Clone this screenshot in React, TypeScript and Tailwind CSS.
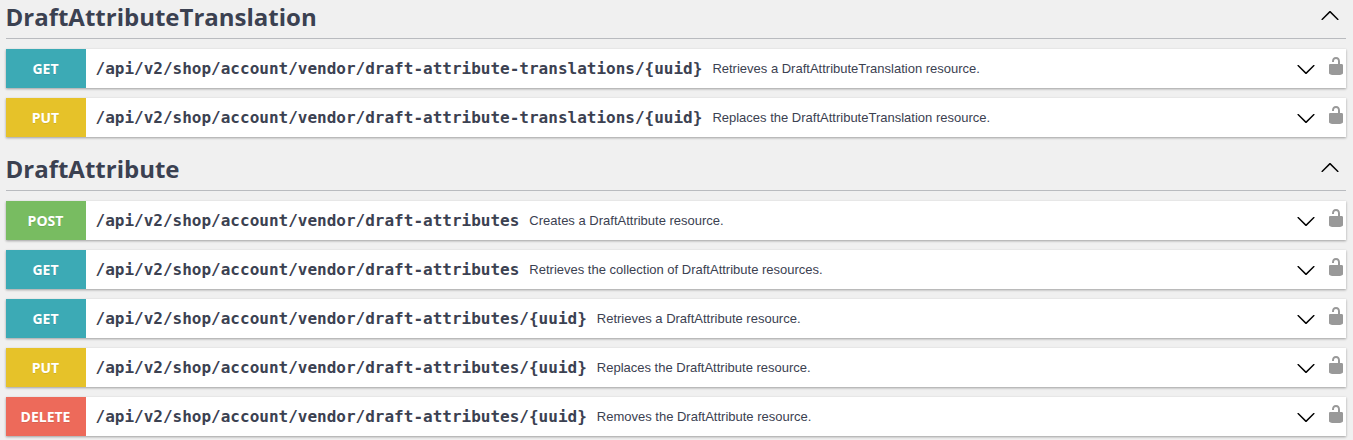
type Op = { method: keyof typeof colors; path: string; text: string };

const colors = {
  GET: "bg-[#3caab5]",
  PUT: "bg-[#e6c229]",
  POST: "bg-[#78bc61]",
  DELETE: "bg-[#ed6a5a]",
};

const groups: { name: string; ops: Op[] }[] = [
  {
    name: "DraftAttributeTranslation",
    ops: [
      { method: "GET", path: "/api/v2/shop/account/vendor/draft-attribute-translations/{uuid}", text: "Retrieves a DraftAttributeTranslation resource." },
      { method: "PUT", path: "/api/v2/shop/account/vendor/draft-attribute-translations/{uuid}", text: "Replaces the DraftAttributeTranslation resource." },
    ],
  },
  {
    name: "DraftAttribute",
    ops: [
      { method: "POST", path: "/api/v2/shop/account/vendor/draft-attributes", text: "Creates a DraftAttribute resource." },
      { method: "GET", path: "/api/v2/shop/account/vendor/draft-attributes", text: "Retrieves the collection of DraftAttribute resources." },
      { method: "GET", path: "/api/v2/shop/account/vendor/draft-attributes/{uuid}", text: "Retrieves a DraftAttribute resource." },
      { method: "PUT", path: "/api/v2/shop/account/vendor/draft-attributes/{uuid}", text: "Replaces the DraftAttribute resource." },
      { method: "DELETE", path: "/api/v2/shop/account/vendor/draft-attributes/{uuid}", text: "Removes the DraftAttribute resource." },
    ],
  },
];

function Arrow({ className }: { className: string }) {
  return (
    <svg viewBox="0 0 20 20" fill="currentColor" className={`h-5 w-5 shrink-0 text-black ${className}`}>
      <path d="M17.418 6.109c.272-.268.709-.268.979 0s.271.701 0 .969l-7.908 7.83c-.27.268-.707.268-.979 0l-7.908-7.83c-.27-.268-.27-.701 0-.969.271-.268.709-.268.979 0L10 13.25z" />
    </svg>
  );
}

function Lock() {
  return (
    <svg viewBox="0 0 20 20" fill="currentColor" className="mb-1.5 h-5 w-5 shrink-0 text-[#999999]">
      <path d="M15.8 8H14V5.6C14 2.703 12.665 1 10 1 7.334 1 6 2.703 6 5.6V6h2v-.801C8 3.754 8.797 3 10 3c1.203 0 2 .754 2 2.199V8H4c-.553 0-1 .646-1 1.199V17c0 .549.428 1.139.951 1.307l1.197.387C5.672 18.861 6.55 19 7.1 19h5.8c.549 0 1.428-.139 1.951-.307l1.196-.387c.524-.167.953-.757.953-1.306V9.199C17 8.646 16.352 8 15.8 8z" />
    </svg>
  );
}

export default function App() {
  return (
    <div className="h-[440px] overflow-hidden bg-[#f0f0f0] pr-[7px] pl-[5.5px] text-[#3b4151]">
      {groups.map((group) => (
        <section key={group.name} className="mb-[2px] flow-root">
          <h3 className="mb-[10px] flex h-[39px] items-center justify-between border-b border-[#3b4151]/30 pr-[6px] pb-[4px] font-['Open_Sans',sans-serif] text-2xl font-bold">
            <span className="-mt-px">{group.name}</span>
            <Arrow className="mb-[3px] rotate-180" />
          </h3>
          {group.ops.map((op, i) => (
            <div key={i} className="mb-[10px] flex h-[39px] items-center bg-white shadow-[0_1px_3px_rgba(0,0,0,0.12),0_1px_2px_rgba(0,0,0,0.24)]">
              <span className={`flex h-full w-20 shrink-0 items-center justify-center font-['Open_Sans',sans-serif] text-sm font-bold text-white text-shadow-[0_1px_0_rgba(0,0,0,0.1)] ${colors[op.method]}`}>
                {op.method}
              </span>
              <span className="pl-[10px] font-['DejaVu_Sans_Mono',monospace] text-base font-bold">{op.path}</span>
              <span className="flex-1 pl-[10px] font-['Liberation_Sans',sans-serif] text-[13px]">{op.text}</span>
              <Arrow className="mr-[10px]" />
              <Lock />
            </div>
          ))}
          <div className="h-[3px]" />
        </section>
      ))}
    </div>
  );
}
